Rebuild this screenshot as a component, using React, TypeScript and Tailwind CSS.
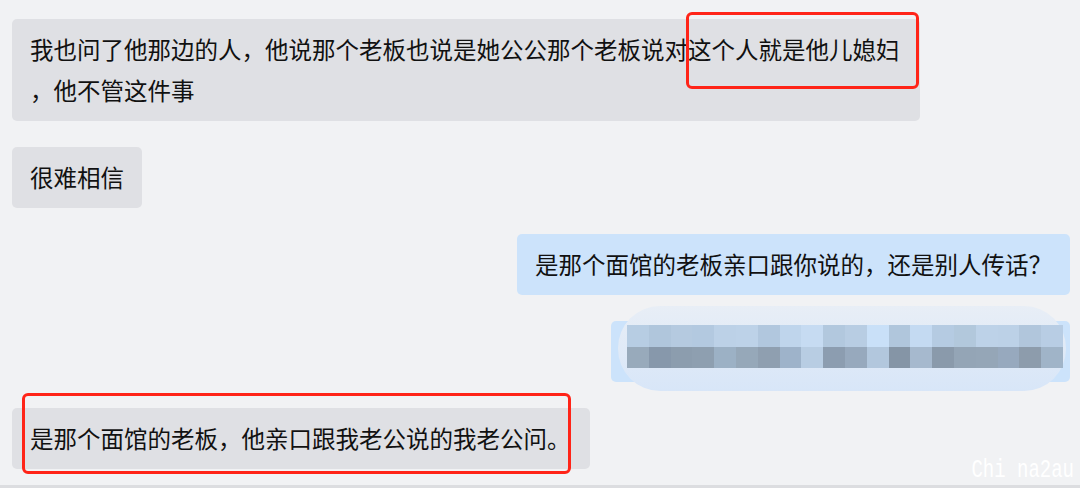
const row1 = [
  '#b7cde3', '#b0c6dc', '#b5cae0', '#b3c9e0', '#bcd1e7', '#bdd2e8', '#b1c7de', '#bfd5ec', '#c6dbf2', '#b2c8de',
  '#b8cde3', '#c9e0f8', '#b0c6dc', '#c4daf2', '#b5cbe2', '#b2c8dc', '#bdd2e8', '#bcd1e7', '#b1c6dc', '#b8cde4',
];
const row2 = [
  '#98aabb', '#8798ab', '#8c9dae', '#8e9fb0', '#9cb1c5', '#96a8b9', '#8f9fb0', '#9eb3ca', '#b8cde3', '#8c9db0',
  '#97a9bd', '#b2c7dd', '#8595a6', '#a6b9ce', '#8a9aab', '#94a5b6', '#95a6b7', '#97a9be', '#8d9cac', '#a0b4c8',
];

function Bubble({ mine, children, className = '' }: { mine?: boolean; children: React.ReactNode; className?: string }) {
  return (
    <div
      className={`relative rounded-[5px] px-[18px] py-[10px] leading-[41px] ${
        mine ? 'self-end bg-[#cce3fb]' : 'self-start bg-[#dfe0e4]'
      } ${className}`}
    >
      {children}
    </div>
  );
}

function Mosaic() {
  return (
    <div className="absolute left-[7px] top-[-15px] w-[448px] h-[85px] rounded-[42px] bg-gradient-to-b from-[#e8eef6] to-[#d8e6f8] flex items-center pl-[9px]">
      <div className="flex flex-col w-[436px] mb-[4px]">
        {[row1, row2].map((row, r) => (
          <div key={r} className="flex h-[21.5px]">
            {row.map((c, i) => (
              <div key={i} className="flex-1" style={{ backgroundColor: c }} />
            ))}
          </div>
        ))}
      </div>
    </div>
  );
}

export default function App() {
  return (
    <div className="relative w-[1080px] h-[488px] overflow-hidden bg-[#f1f2f4] flex flex-col font-['Noto_Sans_CJK_SC',sans-serif] text-[23.5px] text-[#111]">
      <div className="flex-1 flex flex-col gap-[26px] pt-[19px] pl-[12px] pr-[10px]">
        <Bubble className="w-[908px]">
          我也问了他那边的人，他说那个老板也说是她公公那个老板说对这个人就是他儿媳妇
          <br />
          ，他不管这件事
          <div className="absolute left-[674px] top-[-7px] w-[233px] h-[77px] rounded-[6px] border-[3px] border-[#ff2418]" />
        </Bubble>
        <Bubble>很难相信</Bubble>
        <Bubble mine>是那个面馆的老板亲口跟你说的，还是别人传话？</Bubble>
        <Bubble mine className="w-[459px] h-[61px]">
          <Mosaic />
        </Bubble>
        <Bubble className="w-[578px]">
          是那个面馆的老板，他亲口跟我老公说的我老公问。
          <div className="absolute left-[10px] top-[-15px] w-[549px] h-[81px] rounded-[6px] border-[3px] border-[#ff2418]" />
        </Bubble>
      </div>
      <div className="h-[3px] bg-[#dcdde0]" />
      <div className="absolute right-[6px] bottom-[4px] text-white font-['Liberation_Mono',monospace] text-[19px] leading-none origin-bottom scale-y-[1.35]">
        Chi na2au
      </div>
    </div>
  );
}
